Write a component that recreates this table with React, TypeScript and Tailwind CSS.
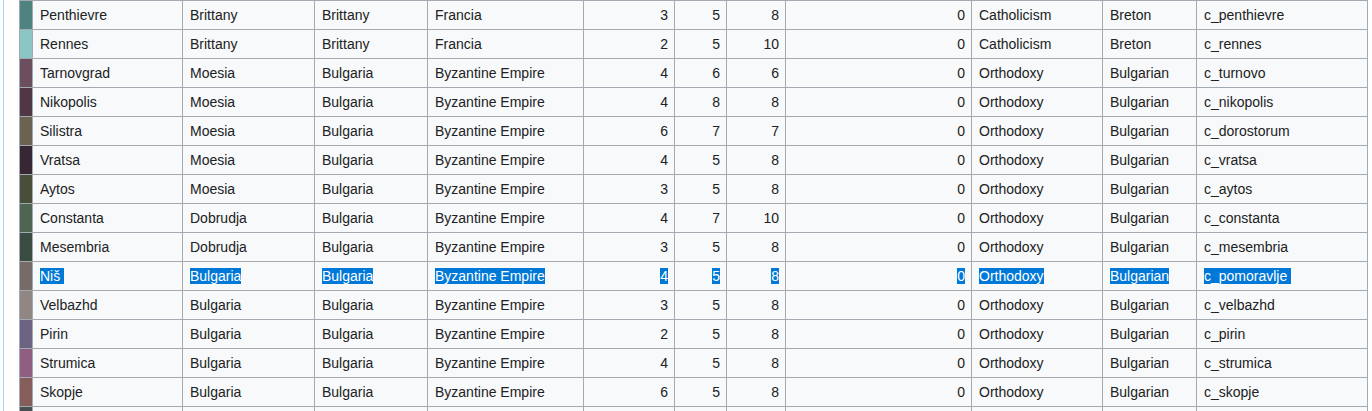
const rows: [string, string, string, string, string, number | string, number | string, number | string, number | string, string, string, string][] = [
  ["#4e8380", "Penthievre", "Brittany", "Brittany", "Francia", 3, 5, 8, 0, "Catholicism", "Breton", "c_penthievre"],
  ["#8ac6c6", "Rennes", "Brittany", "Brittany", "Francia", 2, 5, 10, 0, "Catholicism", "Breton", "c_rennes"],
  ["#6b4f5e", "Tarnovgrad", "Moesia", "Bulgaria", "Byzantine Empire", 4, 6, 6, 0, "Orthodoxy", "Bulgarian", "c_turnovo"],
  ["#513746", "Nikopolis", "Moesia", "Bulgaria", "Byzantine Empire", 4, 8, 8, 0, "Orthodoxy", "Bulgarian", "c_nikopolis"],
  ["#6b6350", "Silistra", "Moesia", "Bulgaria", "Byzantine Empire", 6, 7, 7, 0, "Orthodoxy", "Bulgarian", "c_dorostorum"],
  ["#372634", "Vratsa", "Moesia", "Bulgaria", "Byzantine Empire", 4, 5, 8, 0, "Orthodoxy", "Bulgarian", "c_vratsa"],
  ["#474f3b", "Aytos", "Moesia", "Bulgaria", "Byzantine Empire", 3, 5, 8, 0, "Orthodoxy", "Bulgarian", "c_aytos"],
  ["#4f6451", "Constanta", "Dobrudja", "Bulgaria", "Byzantine Empire", 4, 7, 10, 0, "Orthodoxy", "Bulgarian", "c_constanta"],
  ["#3a4c42", "Mesembria", "Dobrudja", "Bulgaria", "Byzantine Empire", 3, 5, 8, 0, "Orthodoxy", "Bulgarian", "c_mesembria"],
  ["#766b69", "Niš", "Bulgaria", "Bulgaria", "Byzantine Empire", 4, 5, 8, 0, "Orthodoxy", "Bulgarian", "c_pomoravlje"],
  ["#908784", "Velbazhd", "Bulgaria", "Bulgaria", "Byzantine Empire", 3, 5, 8, 0, "Orthodoxy", "Bulgarian", "c_velbazhd"],
  ["#6c6383", "Pirin", "Bulgaria", "Bulgaria", "Byzantine Empire", 2, 5, 8, 0, "Orthodoxy", "Bulgarian", "c_pirin"],
  ["#8f5e80", "Strumica", "Bulgaria", "Bulgaria", "Byzantine Empire", 4, 5, 8, 0, "Orthodoxy", "Bulgarian", "c_strumica"],
  ["#855e5c", "Skopje", "Bulgaria", "Bulgaria", "Byzantine Empire", 6, 5, 8, 0, "Orthodoxy", "Bulgarian", "c_skopje"],
  // only the top edge of this row is on screen
  ["#484e52", "", "", "", "", "", "", "", "", "", "", ""]
];

const widths = [13, 150, 132, 113, 156, 91, 52, 59, 186, 131, 94, 171];

function Cell({ text, right, selected, trailing }: { text: string | number; right?: boolean; selected?: boolean; trailing?: boolean }) {
  return (
    <td className={`h-[29px] border border-[#a2a9b1] py-0 align-middle ${right ? "pl-[6px] pr-[6px] text-right" : "pl-[7px] pr-[6px] text-left"}`}>
      {selected ? (
        <span className="bg-[#0078d7] text-white">
          {text}
          {trailing ? "\u00a0" : ""}
        </span>
      ) : (
        text
      )}
    </td>
  );
}

export default function App() {
  return (
    <div className="h-[411px] overflow-hidden bg-white pl-[3px] font-['Liberation_Sans',Arial,sans-serif] text-[14px] leading-[16px] text-[#202122]">
      <div className="h-full border-l border-[#a7d7f9] pl-[15px]">
        <table className="w-[1348px] table-fixed border-collapse bg-[#f8f9fa]">
          <colgroup>
            {widths.map((w, i) => (
              <col key={i} style={{ width: w }} />
            ))}
          </colgroup>
          <tbody>
            {rows.map((r, i) => {
              const sel = r[1] === "Niš";
              return (
                <tr key={i}>
                  <td className="h-[29px] border border-[#a2a9b1] p-0" style={{ backgroundColor: r[0] }} />
                  <Cell text={r[1]} selected={sel} trailing />
                  <Cell text={r[2]} selected={sel} />
                  <Cell text={r[3]} selected={sel} />
                  <Cell text={r[4]} selected={sel} />
                  <Cell text={r[5]} right selected={sel} />
                  <Cell text={r[6]} right selected={sel} />
                  <Cell text={r[7]} right selected={sel} />
                  <Cell text={r[8]} right selected={sel} />
                  <Cell text={r[9]} selected={sel} />
                  <Cell text={r[10]} selected={sel} />
                  <Cell text={r[11]} selected={sel} trailing />
                </tr>
              );
            })}
          </tbody>
        </table>
      </div>
    </div>
  );
}
